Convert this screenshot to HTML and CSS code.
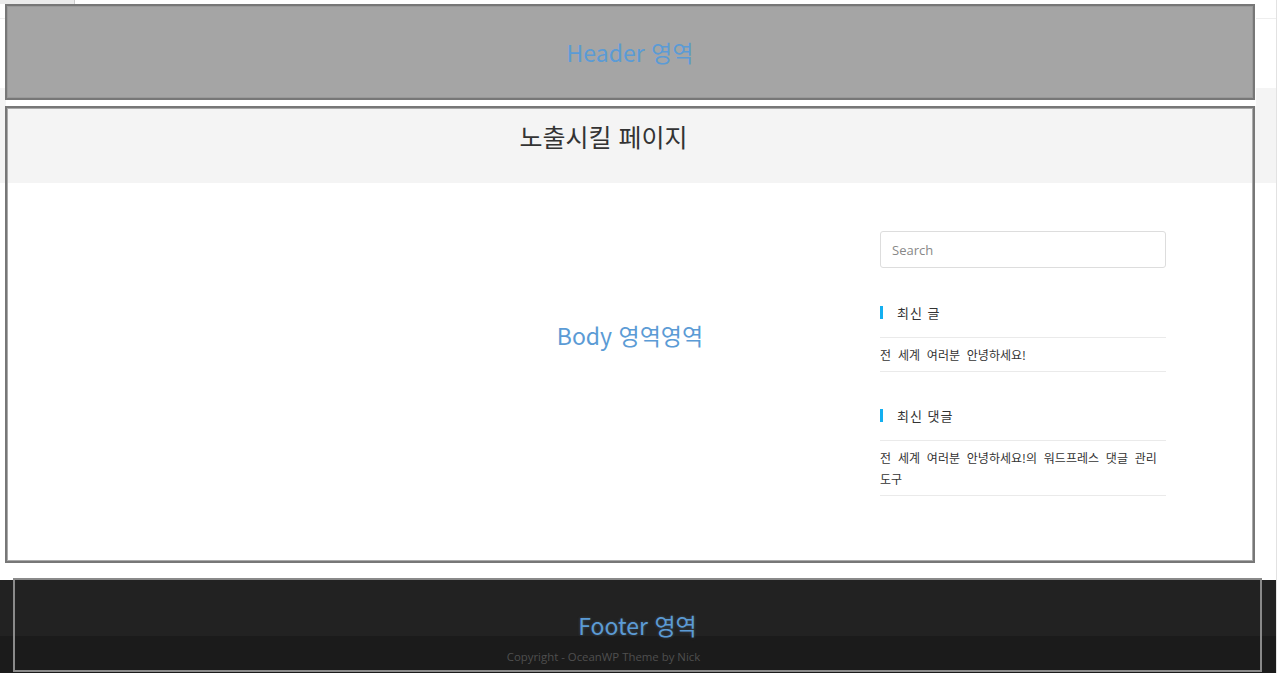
FILE: index.html
```html
<!DOCTYPE html>
<html lang="ko">
<head>
    <meta charset="utf-8">
    <title>노출시킬 페이지</title>
    <link rel="stylesheet" href="styles.css">
</head>
<body>
    <div class="page">
        <div class="topbar"><span class="tab"></span></div>
        <div class="site-header"></div>

        <div class="page-header">
            <div class="center-wrap">
                <h1 class="page-title">노출시킬 페이지</h1>
            </div>
        </div>

        <div class="content">
            <div class="container">
                <main class="primary"></main>
                <aside class="sidebar">
                    <input class="search" type="search" placeholder="Search">

                    <div class="widget">
                        <h4 class="widget-title">최신 글</h4>
                        <ul>
                            <li><a href="#">전 세계 여러분 안녕하세요!</a></li>
                        </ul>
                    </div>

                    <div class="widget">
                        <h4 class="widget-title">최신 댓글</h4>
                        <ul>
                            <li><a href="#">전 세계 여러분 안녕하세요!의 워드프레스 댓글 관리 도구</a></li>
                        </ul>
                    </div>
                </aside>
            </div>
        </div>

        <footer class="site-footer">
            <div class="footer-widgets"></div>
            <div class="footer-bottom">
                <div class="center-wrap">
                    <p class="copyright">Copyright - OceanWP Theme by Nick</p>
                </div>
            </div>
        </footer>

        <!-- layout zones drawn over the theme -->
        <div class="zone zone-header"><span>Header 영역</span></div>
        <div class="zone zone-body"><span>Body 영역영역</span></div>
        <div class="zone zone-footer"><span>Footer 영역</span></div>
    </div>
</body>
</html>
```

FILE: styles.css
```css
body {
    margin: 0;
    background-color: #fff;
    font-family: "Noto Sans CJK KR", "Noto Sans", sans-serif;
    color: #333;
}
.page {
    position: relative;
    width: 1276px;
    height: 673px;
    overflow: hidden;
    border-right: 1px solid #e2e2e2;
}
.topbar {
    height: 18px;
    border-bottom: 1px solid #eee;
}
.tab {
    display: block;
    width: 74px;
    height: 4px;
    background-color: #ebebeb;
    border-right: 1px solid #ccc;
}
.site-header {
    height: 69px;
}
.page-header {
    height: 95px;
    background-color: #f4f4f4;
}
.center-wrap {
    width: 1207px;
    text-align: center;
}
.page-title {
    margin: 0;
    padding-top: 32px;
    font-size: 25px;
    line-height: 32px;
    font-weight: normal;
    color: #333;
}
.content {
    height: 397px;
}
.container {
    display: flex;
    margin-left: 38px;
    width: 1128px;
}
.primary {
    flex: 1;
}
.sidebar {
    width: 286px;
    padding-top: 48px;
}
.search {
    display: block;
    box-sizing: border-box;
    width: 286px;
    height: 37px;
    padding: 0 11px;
    border: 1px solid #ddd;
    border-radius: 3px;
    font-family: "Open Sans", sans-serif;
    font-size: 13px;
    color: #333;
    outline: none;
}
.search::placeholder {
    color: #888;
}
.widget {
    margin-top: 38px;
}
.widget + .widget {
    margin-top: 37px;
}
.widget-title {
    margin: 0 0 18px;
    padding-left: 14px;
    border-left: 3px solid #13aff0;
    font-size: 13px;
    line-height: 13px;
    font-weight: normal;
    letter-spacing: 1px;
    color: #333;
}
.widget ul {
    list-style: none;
    margin: 0;
    padding: 0;
    border-top: 1px solid #eaeaea;
}
.widget li {
    padding: 6px 0;
    border-bottom: 1px solid #eaeaea;
    font-size: 12px;
    line-height: 21px;
    word-spacing: 3.5px;
    word-break: keep-all;
}
.widget a {
    color: #333;
    text-decoration: none;
}
.footer-widgets {
    height: 56px;
    background-color: #222;
}
.footer-bottom {
    height: 37px;
    background-color: #1b1b1b;
}
.copyright {
    margin: 0;
    padding-top: 13px;
    font-family: "Open Sans", sans-serif;
    font-size: 11.4px;
    line-height: 16px;
    color: #4f4f4f;
}

.zone {
    position: absolute;
    box-sizing: border-box;
    display: flex;
    align-items: center;
    justify-content: center;
    font-size: 23px;
    color: #5b9bd5;
}
.zone-header {
    left: 5px;
    top: 4px;
    width: 1250px;
    height: 96px;
    background-color: #a5a5a5;
    border: 2px solid #777;
    box-shadow: inset 0 0 0 1px #999, 1px 6px 0 #fff;
}
.zone-body {
    left: 5px;
    top: 106px;
    width: 1250px;
    height: 457px;
    border: 2px solid #777;
    box-shadow: inset 0 0 0 1px #aaa;
}
.zone-footer {
    left: 13px;
    top: 578px;
    width: 1249px;
    height: 94px;
    border: 2px solid #8a8a8a;
    text-shadow: 0 0 3px rgba(120, 170, 220, 0.35);
}
```
